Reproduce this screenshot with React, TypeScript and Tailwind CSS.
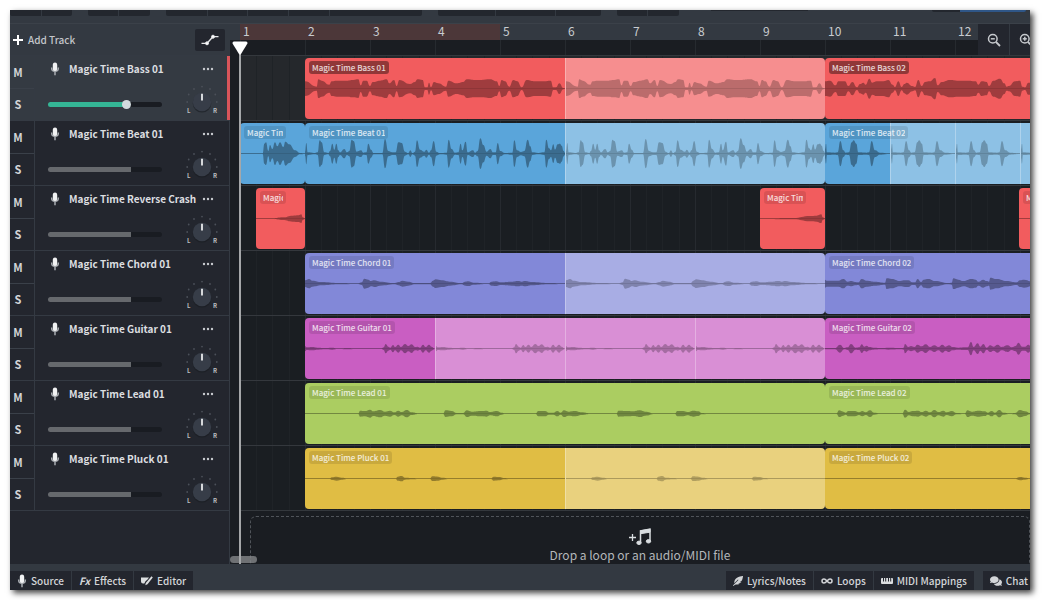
import { type ReactNode } from "react";
import { FaComments, FaFeatherAlt } from "react-icons/fa";
import { Infinity as InfinityIcon } from "lucide-react";

interface Segment {
  width: number;
  wave: string;
  looped?: boolean;
}

interface Clip {
  name: string;
  gap?: number; // empty space before the clip
  segments: Segment[];
}

interface Track {
  name: string;
  color: string;
  selected?: boolean;
  clips: Clip[];
}

// Waveforms: "x,amplitude" pairs, three units per pixel.
const BASS_1 =
  "0,22 35,6 40,28 50,24 73,12 80,22 95,24 125,24 145,26 160,28 167,10 175,24 185,24 195,8 203,20 225,24 245,28 253,16 267,26 275,8 283,26 315,14 330,20 337,28 353,26 360,4 367,4 372,18 378,5 387,20 400,16 423,6 430,24 455,16 475,20 485,28 510,26 525,26 555,28 575,22 583,8 590,26 600,22 613,6 625,26 637,22 650,4 665,26 690,22 715,22 737,24 745,4 753,4 763,16 775,2 780,1";
const BASS_2 =
  "0,22 15,24 32,10 40,22 60,22 70,8 82,20 96,4 105,14 115,18 122,12 133,30 142,18 155,22 175,22 190,26 203,12 210,5 220,22 230,5 238,14 245,18 262,8 270,5 280,26 290,8 300,20 315,22 330,32 338,10 350,20 375,26 400,24 430,24 452,22 460,12 470,22 485,20 492,8 505,24 525,30 538,16 545,6 552,8 570,22 585,24 592,6 600,4 610,18 630,18 650,4";
const BEAT_0 =
  "0,1 68,1 73,30 78,34 85,8 90,26 97,14 105,34 112,22 120,34 130,20 136,36 148,28 165,10 180,2 195,1";
const BEAT_1 =
  "0,6 4,32 8,4 30,2 38,4 44,40 50,34 58,4 70,2 75,8 82,30 88,12 94,30 100,10 105,4 118,14 126,4 133,8 140,42 146,38 155,6 168,10 175,3 184,4 190,30 198,12 206,2 232,2 240,44 250,8 262,4 272,4 280,34 290,32 300,6 310,2 316,10 322,2 330,6 336,40 345,12 358,6 364,12 372,3 378,10 386,38 394,6 405,2 425,3 431,42 440,14 450,3 460,4 467,30 472,10 482,36 488,4 504,10 510,3 518,8 526,46 535,26 545,6 556,14 564,4 572,4 578,32 586,8 600,2 622,3 628,40 636,10 648,5 658,8 668,42 676,22 682,4 700,2 718,4 724,42 732,16 738,10 745,28 750,12 758,28 765,30 770,24 776,8 780,3";
const BEAT_2 =
  "0,14 3,30 6,4 30,3 38,4 46,38 55,10 62,3 72,4 80,34 86,40 94,30 100,4 125,3 132,4 140,38 150,10 165,3 195,1";
const CRASH_SHORT = "0,1 50,1 80,4 110,9 128,10 136,13 140,4 147,1";
const CRASH = "0,1 100,2 150,8 170,9 184,13 188,4 195,1";
const CHORD_1 =
  "0,10 12,14 22,9 50,5 100,2 160,1 170,4 178,15 190,12 198,8 208,10 225,6 270,2 280,5 292,9 310,6 330,2 375,2 384,9 392,13 410,10 435,6 470,2 480,6 490,7 505,3 550,1 560,6 575,7 585,4 620,6 640,8 650,6 660,8 680,5 730,2 780,1";
const CHORD_2 =
  "0,12 5,9 30,9 40,9 55,14 68,6 80,8 90,5 100,4 110,14 125,9 150,6 180,3 185,16 200,14 225,8 240,10 250,10 262,4 270,4 278,14 288,5 296,12 310,14 330,8 370,2 380,3 385,16 400,12 415,8 440,14 452,12 460,6 475,12 485,8 492,6 496,18 515,14 545,8 575,4 585,10 597,12 620,7 780,1";
const GUITAR_1 =
  "0,8 5,4 20,5 40,3 60,2 80,3 100,1 130,2 150,1 230,1 236,4 242,14 250,6 256,3 264,11 270,5 280,12 288,5 300,14 310,8 320,13 330,5 338,6 345,3 354,12 362,5 372,12 380,6 388,2";
const GUITAR_2 =
  "0,2 30,2 45,12 58,2 68,4 78,14 92,3 103,4 110,13 118,6 125,9 133,5 145,3 170,2 190,3 230,2 236,3 240,14 250,5 258,8 268,5 277,12 290,7 302,13 315,5 328,10 340,5 352,12 362,6 372,10 382,5 400,3 420,4 428,4 438,20 446,5 458,16 466,6 475,14 485,3 496,10 505,6 518,12 530,5 548,10 560,4 572,8 580,18 592,6 600,6 610,12 620,4 780,1";
const LEAD_1 =
  "0,1 160,1 165,9 180,8 195,12 205,7 225,11 240,6 255,9 268,4 280,9 290,5 305,11 320,4 340,1 415,1 421,10 440,8 455,2 475,2 485,10 500,6 530,8 545,9 555,5 575,8 590,3 600,1 692,1 700,8 720,8 732,3 745,3 757,8 767,3 777,10 790,6 810,8 830,4 855,1 935,1 940,9 970,8 985,7 1005,10 1020,6 1050,1 1110,1 1117,8 1135,8 1147,5 1165,9 1180,7 1190,2 1210,1 1560,1";
const LEAD_2 =
  "0,1 35,1 42,10 55,6 62,3 70,8 90,8 102,4 112,8 122,4 135,10 147,3 165,1 232,1 240,12 252,5 262,8 280,9 290,5 302,9 315,4 328,11 340,5 355,9 365,4 380,8 395,2 420,1 427,10 440,6 460,9 480,7 488,3 500,8 510,3 523,11 535,3 555,1 570,2 585,11 600,7 615,2 780,1";
const PLUCK_1 =
  "0,1 75,1 80,4 95,6 110,3 130,1 272,1 278,6 290,8 300,3 325,2 340,1 375,1 382,7 400,6 410,3 435,1 558,1 566,6 585,5 595,2 620,1 780,1";
const PLUCK_2 = "0,1 570,1 585,5 600,3 615,1 780,1";

const tracks: Track[] = [
  {
    name: "Magic Time Bass 01",
    color: "bg-[#f25c5e]",
    selected: true,
    clips: [
      {
        name: "Magic Time Bass 01",
        gap: 65,
        segments: [
          { width: 260, wave: BASS_1 },
          { width: 260, wave: BASS_1, looped: true },
        ],
      },
      { name: "Magic Time Bass 02", segments: [{ width: 260, wave: BASS_2 }] },
    ],
  },
  {
    name: "Magic Time Beat 01",
    color: "bg-[#5aa5da]",
    clips: [
      { name: "Magic Time Beat 01", segments: [{ width: 65, wave: BEAT_0 }] },
      {
        name: "Magic Time Beat 01",
        segments: [
          { width: 260, wave: BEAT_1 },
          { width: 260, wave: BEAT_1, looped: true },
        ],
      },
      {
        name: "Magic Time Beat 02",
        segments: [
          { width: 65, wave: BEAT_2 },
          { width: 65, wave: BEAT_2, looped: true },
          { width: 65, wave: BEAT_2, looped: true },
          { width: 65, wave: BEAT_2, looped: true },
        ],
      },
    ],
  },
  {
    name: "Magic Time Reverse Crash",
    color: "bg-[#f25c5e]",
    clips: [
      { name: "Magic Time Reverse", gap: 16, segments: [{ width: 49, wave: CRASH_SHORT }] },
      { name: "Magic Time Reverse", gap: 455, segments: [{ width: 65, wave: CRASH }] },
      { name: "Magic Time Reverse", gap: 194, segments: [{ width: 65, wave: CRASH }] },
    ],
  },
  {
    name: "Magic Time Chord 01",
    color: "bg-[#8288d8]",
    clips: [
      {
        name: "Magic Time Chord 01",
        gap: 65,
        segments: [
          { width: 260, wave: CHORD_1 },
          { width: 260, wave: CHORD_1, looped: true },
        ],
      },
      { name: "Magic Time Chord 02", segments: [{ width: 260, wave: CHORD_2 }] },
    ],
  },
  {
    name: "Magic Time Guitar 01",
    color: "bg-[#c95ec2]",
    clips: [
      {
        name: "Magic Time Guitar 01",
        gap: 65,
        segments: [
          { width: 130, wave: GUITAR_1 },
          { width: 130, wave: GUITAR_1, looped: true },
          { width: 130, wave: GUITAR_1, looped: true },
          { width: 130, wave: GUITAR_1, looped: true },
        ],
      },
      { name: "Magic Time Guitar 02", segments: [{ width: 260, wave: GUITAR_2 }] },
    ],
  },
  {
    name: "Magic Time Lead 01",
    color: "bg-[#abcd61]",
    clips: [
      { name: "Magic Time Lead 01", gap: 65, segments: [{ width: 520, wave: LEAD_1 }] },
      { name: "Magic Time Lead 02", segments: [{ width: 260, wave: LEAD_2 }] },
    ],
  },
  {
    name: "Magic Time Pluck 01",
    color: "bg-[#e0bd44]",
    clips: [
      {
        name: "Magic Time Pluck 01",
        gap: 65,
        segments: [
          { width: 260, wave: PLUCK_1 },
          { width: 260, wave: PLUCK_1, looped: true },
        ],
      },
      { name: "Magic Time Pluck 02", segments: [{ width: 260, wave: PLUCK_2 }] },
    ],
  },
];

const bars = [1, 2, 3, 4, 5, 6, 7, 8, 9, 10, 11, 12];

function MicIcon() {
  return (
    <svg viewBox="0 0 10 14" className="w-2.5 h-3.5 shrink-0" fill="none">
      <path d="M1.6 5.5c0 5.2 6.8 5.2 6.8 0" stroke="#a9adb2" strokeWidth="1.4" />
      <path d="M5 9.5v3.8" stroke="#a9adb2" strokeWidth="1.5" />
      <rect x="2.8" y="0.5" width="4.4" height="8.6" rx="2.2" fill="#f1f2f3" />
    </svg>
  );
}

function ZoomIcon({ plus }: { plus?: boolean }) {
  return (
    <svg viewBox="0 0 14 14" className="w-3.5 h-3.5 shrink-0" fill="none" stroke="#c6c9cd" strokeWidth="1.5">
      <circle cx="5.8" cy="5.8" r="4.3" />
      <path d="M9 9l4 4" strokeWidth="1.8" />
      <path d="M3.8 5.8h4" />
      {plus && <path d="M5.8 3.8v4" />}
    </svg>
  );
}

// Joins the points with flat-topped curves so each hit stays a rounded blob.
function smooth(points: number[][]) {
  return points
    .slice(1)
    .map(([x, y], i) => {
      const [px, py] = points[i];
      const mid = (px + x) / 2;
      return `C${mid},${py} ${mid},${y} ${x},${y}`;
    })
    .join("");
}

function Waveform({ wave, width, looped }: Segment) {
  const points = wave.split(" ").map((p) => p.split(",").map(Number));
  const top = points.map(([x, h]) => [x, 92 - h]);
  const bottom = points.map(([x, h]) => [x, 92 + h]).reverse();
  return (
    <svg
      viewBox={`0 0 ${width * 3} 183`}
      preserveAspectRatio="none"
      className={looped ? "w-full h-full fill-black/24" : "w-full h-full fill-black/34"}
    >
      <path d={`M${top[0].join()}${smooth(top)}L${bottom[0].join()}${smooth(bottom)}Z`} />
      <rect x="0" y="90" width={width * 3} height="3" className="fill-black/10" />
    </svg>
  );
}

function ClipBlock({ clip, color, selected }: { clip: Clip; color: string; selected?: boolean }) {
  return (
    <div
      className={`relative flex shrink-0 h-[61px] rounded-[4px] overflow-hidden ${color}`}
      style={{ marginLeft: clip.gap ?? 0 }}
    >
      {clip.segments.map((segment, index) => (
        <div
          key={index}
          className={segment.looped ? "bg-white/31 border-l border-white/30" : ""}
          style={{ width: segment.width }}
        >
          <Waveform {...segment} />
        </div>
      ))}
      <div
        className={`absolute left-1 top-[3px] max-w-[calc(100%-23px)] rounded-[3px] px-[3px] text-[8px] leading-[13px] font-medium whitespace-nowrap ${
          selected ? "bg-black/40 text-white/80" : "bg-black/10 text-white/80"
        }`}
      >
        <div className="overflow-hidden">{clip.name}</div>
      </div>
    </div>
  );
}

function PanKnob({ name }: { name: string }) {
  return (
    <label className="relative block w-8 h-8 shrink-0">
      <input type="range" min="-50" max="50" defaultValue="0" aria-label={`${name} pan`} className="absolute inset-0 w-full h-full opacity-0" />
      <svg viewBox="0 0 32 32" className="w-8 h-8">
        <g fill="#4b5059">
          <circle cx="16" cy="1.6" r="0.9" />
          <circle cx="8" cy="4" r="0.9" />
          <circle cx="24" cy="4" r="0.9" />
          <circle cx="2.7" cy="9.5" r="0.9" />
          <circle cx="29.3" cy="9.5" r="0.9" />
          <circle cx="1.2" cy="17" r="0.9" />
          <circle cx="30.8" cy="17" r="0.9" />
        </g>
        <circle cx="16" cy="18.4" r="9.2" fill="#191c21" opacity="0.6" />
        <circle cx="16" cy="17" r="9.2" fill="#373d48" />
        <path d="M16 8.8v6.6" stroke="#e8eaec" strokeWidth="1.8" />
        <text x="1" y="28" fontSize="6" fontWeight="700" fill="#b9bcc0">L</text>
        <text x="27" y="28" fontSize="6" fontWeight="700" fill="#b9bcc0">R</text>
      </svg>
    </label>
  );
}

function TrackHeader({ track }: { track: Track }) {
  return (
    <div
      className={`flex h-[65px] border-t border-[#343a43] ${
        track.selected ? "bg-[#343a42]" : "bg-[#23262e]"
      }`}
    >
      <div className="flex flex-col w-[25px] shrink-0 border-r border-[#343a43] text-[11px] font-bold text-[#d3d5d8]">
        <button className="flex-1 pr-2 border-b border-[#3a4049]" aria-label={`Mute ${track.name}`}>M</button>
        <button className="flex-1 pr-2" aria-label={`Solo ${track.name}`}>S</button>
      </div>
      <div className="flex-1 flex flex-col min-w-0 pl-[13px] pr-[9px]">
        <div className="flex items-center h-[26px] px-0.5">
          <MicIcon />
          <span className="ml-[9px] text-[10px] leading-[16px] font-bold text-[#dcdee0] whitespace-nowrap">{track.name}</span>
          <button className="ml-auto p-0.5" aria-label={`${track.name} menu`}>
            <svg viewBox="0 0 12 4" className="w-3 h-1" fill="#c8cbcf">
              <circle cx="2" cy="2" r="1.2" />
              <circle cx="6" cy="2" r="1.2" />
              <circle cx="10" cy="2" r="1.2" />
            </svg>
          </button>
        </div>
        <div className="flex items-center justify-between h-[38px]">
          <input
            type="range"
            min="0"
            max="100"
            defaultValue="70"
            aria-label={`${track.name} volume`}
            className={`appearance-none w-[114px] h-[5px] mt-1.5 rounded-full [&::-webkit-slider-thumb]:appearance-none ${
              track.selected
                ? "bg-[linear-gradient(90deg,#34b595_69%,#191c22_69%)] [&::-webkit-slider-thumb]:w-[9px] [&::-webkit-slider-thumb]:h-[9px] [&::-webkit-slider-thumb]:rounded-full [&::-webkit-slider-thumb]:bg-[#d2dadd]"
                : "bg-[linear-gradient(90deg,#66696d_73%,#191c22_73%)] [&::-webkit-slider-thumb]:w-0 [&::-webkit-slider-thumb]:h-0"
            }`}
          />
          <PanKnob name={track.name} />
        </div>
      </div>
      <div className={track.selected ? "w-[3px] shrink-0 bg-[#d9555a]" : "w-[3px] shrink-0 border-r border-[#343a43]"} />
    </div>
  );
}

function ToolGroup({ widths }: { widths: string[] }) {
  return (
    <div className="flex gap-px">
      {widths.map((width, index) => (
        <div key={index} className={`h-1.5 bg-[#23272e] last:rounded-br-[2px] first:rounded-bl-[2px] ${width}`} />
      ))}
    </div>
  );
}

function FooterButton({ children, className = "pr-[7px]" }: { children: ReactNode; className?: string }) {
  return (
    <button className={`flex items-center gap-1 h-[19px] pl-[7px] bg-[#23262e] text-[10px] leading-[16px] font-medium text-[#d3d5d8] whitespace-nowrap ${className}`}>
      {children}
    </button>
  );
}

export default function App() {
  return (
    <div className="h-screen min-h-[560px] py-2.5 pl-2.5 pr-3 bg-white font-['Noto_Sans_CJK_SC','Open_Sans',sans-serif]">
      <div className="flex flex-col h-full overflow-hidden bg-[#333941] shadow-[3px_3px_6px_rgba(0,0,0,0.75)]">
        <div className="flex gap-4 h-[13px] shrink-0">
          <ToolGroup widths={["w-[31px]", "w-[30px]"]} />
          <ToolGroup widths={["w-[30px]", "w-[31px]"]} />
          <ToolGroup widths={["w-[41px]", "w-[39px]", "w-[40px]", "w-[40px]", "w-[92px]"]} />
          <ToolGroup widths={["w-[57px]", "w-[59px]", "w-[45px]"]} />
          <ToolGroup widths={["w-[30px]", "w-[31px]"]} />
          <div className="w-[97px] h-px ml-4 bg-[#23272e]" />
          <div className="flex ml-auto mr-1">
            <div className="w-7 h-0.5 rounded-bl bg-[#23272e]" />
            <div className="w-[66px] h-0.5 rounded-br bg-[#2f5687]" />
          </div>
        </div>

        <div className="flex flex-1 min-h-0">
          <aside className="flex flex-col w-[220px] shrink-0 bg-[#23262e]">
            <div className="flex items-center justify-between h-8 shrink-0 pr-[5px] border-t border-[#3b4149] bg-[#333941]">
              <button className="flex items-center gap-1 pl-0.5 text-[10px] leading-[16px] font-medium text-[#c3c6ca]">
                <svg viewBox="0 0 12 12" className="w-3 h-3" stroke="#fff" strokeWidth="2">
                  <path d="M6 1v10M1 6h10" />
                </svg>
                Add Track
              </button>
              <button className="flex items-center justify-center w-[30px] h-[22px] rounded-[2px] bg-[#23262e]" aria-label="Automation">
                <svg viewBox="0 0 18 12" className="w-[18px] h-3" fill="#fff" stroke="#e5e7e9">
                  <path d="M0.5 9.3h5.5L12 2.7h5.5" fill="none" strokeWidth="1.3" />
                  <circle cx="6" cy="9.3" r="1.5" />
                  <circle cx="12" cy="2.7" r="1.5" />
                </svg>
              </button>
            </div>
            {tracks.map((track) => (
              <TrackHeader key={track.name} track={track} />
            ))}
            <div className="flex-1 border-t border-r border-[#343a43]" />
          </aside>

          <main className="relative flex flex-col flex-1 min-w-0 bg-[#1a1d22]">
            <div className="flex h-8 shrink-0 border-t border-[#3b4149]">
              <div className="flex-1 flex flex-col min-w-0 overflow-hidden">
                <div className="flex h-4 shrink-0 pl-2.5 bg-[#333941]">
                  {bars.map((bar) => (
                    <div
                      key={bar}
                      className={`w-[65px] shrink-0 pl-[3px] text-[12px] leading-[14px] text-[#c9ccd0] ${bar < 5 ? "bg-[#4c3739]" : ""}`}
                    >
                      {bar}
                    </div>
                  ))}
                </div>
                <div className="flex-1 ml-2.5 bg-[linear-gradient(90deg,#262a2f_1px,transparent_1px)] bg-[length:65px_100%]" />
              </div>
              <div className="flex gap-px w-[52px] shrink-0 overflow-hidden bg-[#333941]">
                <button className="flex items-center justify-center w-[31px] shrink-0 bg-[#23262e]" aria-label="Zoom out">
                  <ZoomIcon />
                </button>
                <button className="flex items-center justify-center w-[31px] shrink-0 bg-[#23262e]" aria-label="Zoom in">
                  <ZoomIcon plus />
                </button>
              </div>
            </div>

            <div className="pl-2.5">
              {tracks.map((track) => (
                <div
                  key={track.name}
                  className={`flex h-[65px] pt-0.5 overflow-hidden border-t border-[#34383d] bg-[linear-gradient(90deg,#262a2f_1px,transparent_1px_16px,#1f2327_16px_17px,transparent_17px_32px,#1f2327_32px_33px,transparent_33px_49px,#1f2327_49px_50px,transparent_50px)] bg-[length:65px_100%] ${
                    track.selected ? "bg-[#25282c]" : "bg-[#1a1e22]"
                  }`}
                >
                  {track.clips.map((clip, index) => (
                    <ClipBlock key={index} clip={clip} color={track.color} selected={track.selected} />
                  ))}
                </div>
              ))}
            </div>

            <div className="flex-1 min-h-0 pl-2.5">
              <div className="h-full pt-[5px] pl-2.5 border-t border-[#34383d] overflow-hidden">
                <div className="flex flex-col items-center justify-end h-full rounded-t-md border border-b-0 border-dashed border-[#50545a]">
                  <svg viewBox="0 0 24 18" className="w-6 h-[18px]" fill="#d9dde0" stroke="#d9dde0">
                    <path d="M1 9.5h7M4.5 6v7" strokeWidth="1.3" />
                    <path d="M12.5 14.5V2.8L22 1.2v12" fill="none" strokeWidth="1.5" />
                    <path d="M12.5 2.8L22 1.2v3L12.5 5.7z" />
                    <ellipse cx="11" cy="14.8" rx="2.2" ry="1.7" />
                    <ellipse cx="20.5" cy="13.3" rx="2.2" ry="1.7" />
                  </svg>
                  <p className="text-[12px] leading-[18px] text-[#b4b7ba]">Drop a loop or an audio/MIDI file</p>
                </div>
              </div>
            </div>

            <div className="absolute left-0 bottom-px w-[27px] h-[7px] rounded-full bg-[#85878a]/80" />
            <div className="absolute left-[9px] top-7 bottom-0 w-[2px] bg-[#a5a7a9]" />
            <svg viewBox="0 0 16 14" className="absolute left-[2px] top-[18px] w-4 h-3.5" fill="#fff">
              <path d="M2 0.5h12a1.5 1.5 0 0 1 1.3 2.2L9 13q-1 1-2 0L0.7 2.7A1.5 1.5 0 0 1 2 0.5z" />
            </svg>
          </main>
        </div>

        <footer className="flex items-end justify-between h-[26px] shrink-0 overflow-hidden">
          <div className="flex gap-px">
            <FooterButton>
              <MicIcon />
              Source
            </FooterButton>
            <FooterButton>
              <span className="font-bold italic">Fx</span>
              Effects
            </FooterButton>
            <FooterButton>
              <svg viewBox="0 0 12 10" className="w-3 h-2.5" fill="#dcdee0">
                <path d="M0 1.5h8L6.500 3.500 4.500 5.300 3.300 7.500H2Q0 7.500 0 5.500z" />
                <path d="M10.500 0.300l1.300 1.200L6.500 8.300 4.300 9.300l0.500-2.200z" />
              </svg>
              Editor
            </FooterButton>
          </div>
          <div className="flex gap-px">
            <FooterButton>
              <FaFeatherAlt className="w-2.5 h-2.5" />
              Lyrics/Notes
            </FooterButton>
            <FooterButton>
              <InfinityIcon className="w-3 h-3" strokeWidth={3} />
              Loops
            </FooterButton>
            <FooterButton>
              <svg viewBox="0 0 12 6" className="w-3 h-1.5">
                <rect width="12" height="6" rx="1" fill="#dcdee0" />
                <path d="M2.5 0v3.5M4.7 0v3.5M7.5 0v3.5M9.7 0v3.5" stroke="#23262e" strokeWidth="1" />
              </svg>
              MIDI Mappings
            </FooterButton>
            <FooterButton className="ml-2 pr-0.5">
              <FaComments className="w-3 h-3" />
              Chat
            </FooterButton>
          </div>
        </footer>
      </div>
    </div>
  );
}
